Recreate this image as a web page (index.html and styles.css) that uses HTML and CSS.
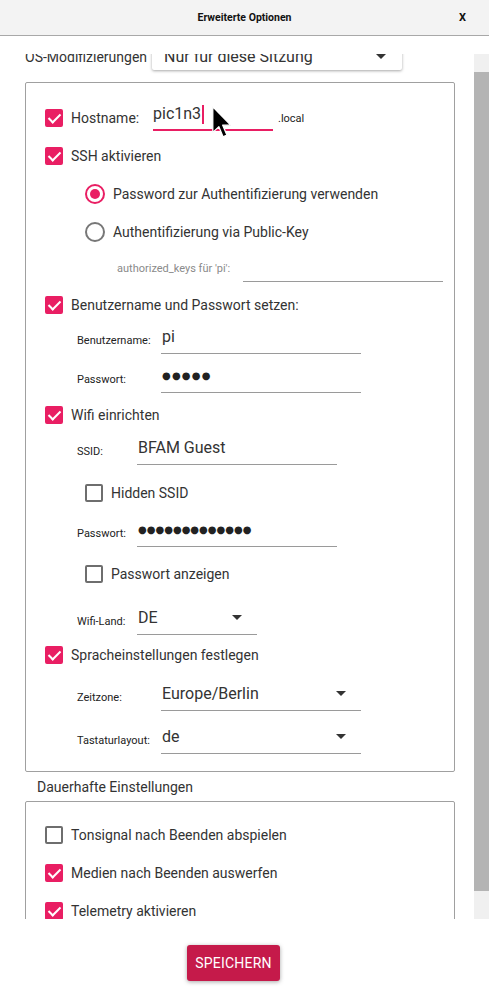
FILE: index.html
```html
<!DOCTYPE html>
<html lang="de">
<head>
<meta charset="utf-8">
<title>Erweiterte Optionen</title>
<link rel="stylesheet" href="styles.css">
</head>
<body>
<header class="titlebar">
  <div class="title">Erweiterte Optionen</div>
  <div class="close">X</div>
</header>

<div class="main">
  <div class="viewport">
    <div class="content">
      <div class="os-row">
        <span class="os-label">OS-Modifizierungen</span>
        <div class="combo"><span>Nur für diese Sitzung</span><i class="caret"></i></div>
      </div>

      <div class="box box-main">
        <div class="check-row">
          <span class="cb on"></span>
          <span class="host-label">Hostname:</span>
          <div class="host-input"><span>pic1n3</span><i class="text-cursor"></i></div>
          <span class="suffix">.local</span>
        </div>
        <div class="check-row"><span class="cb on"></span><span>SSH aktivieren</span></div>
        <div class="check-row indent radio-row"><span class="radio on"></span><span>Password zur Authentifizierung verwenden</span></div>
        <div class="check-row indent radio-row"><span class="radio"></span><span>Authentifizierung via Public-Key</span></div>
        <div class="field-row keys-row mt-1">
          <span class="field-label muted">authorized_keys für 'pi':</span>
          <div class="line-input w200"></div>
        </div>

        <div class="check-row mt-4"><span class="cb on"></span><span>Benutzername und Passwort setzen:</span></div>
        <div class="field-row sub">
          <span class="field-label w84">Benutzername:</span>
          <div class="line-input w200"><span class="value">pi</span></div>
        </div>
        <div class="field-row sub mt-9">
          <span class="field-label w84">Passwort:</span>
          <div class="line-input w200"><span class="dots">●●●●●</span></div>
        </div>

        <div class="check-row mt-3"><span class="cb on"></span><span>Wifi einrichten</span></div>
        <div class="field-row sub mt-1">
          <span class="field-label w60">SSID:</span>
          <div class="line-input w200"><span class="value">BFAM Guest</span></div>
        </div>
        <div class="check-row indent mt-9"><span class="cb"></span><span>Hidden SSID</span></div>
        <div class="field-row sub mt-5">
          <span class="field-label w60">Passwort:</span>
          <div class="line-input w200"><span class="dots dense">●●●●●●●●●●●●●</span></div>
        </div>
        <div class="check-row indent mt-8"><span class="cb"></span><span>Passwort anzeigen</span></div>
        <div class="field-row sub mt-12">
          <span class="field-label w60">Wifi-Land:</span>
          <div class="line-input w120 select"><span class="value">DE</span><i class="caret"></i></div>
        </div>

        <div class="check-row mt-1"><span class="cb on"></span><span>Spracheinstellungen festlegen</span></div>
        <div class="field-row sub mt-7">
          <span class="field-label w84">Zeitzone:</span>
          <div class="line-input w200 select"><span class="value">Europe/Berlin</span><i class="caret"></i></div>
        </div>
        <div class="field-row sub mt-13">
          <span class="field-label w84">Tastaturlayout:</span>
          <div class="line-input w200 select"><span class="value">de</span><i class="caret"></i></div>
        </div>
      </div>

      <div class="section-title">Dauerhafte Einstellungen</div>

      <div class="box box-persist">
        <div class="check-row"><span class="cb"></span><span>Tonsignal nach Beenden abspielen</span></div>
        <div class="check-row"><span class="cb on"></span><span>Medien nach Beenden auswerfen</span></div>
        <div class="check-row"><span class="cb on"></span><span>Telemetry aktivieren</span></div>
      </div>
    </div>
  </div>
  <div class="scrollbar">
    <div class="track-top"></div>
    <div class="thumb"></div>
    <div class="track-bottom"></div>
  </div>
</div>

<footer class="footer">
  <button class="save">SPEICHERN</button>
</footer>

<svg class="pointer" width="20" height="32" viewBox="0 0 12.5 20" aria-hidden="true">
  <path d="M0.5 0.5 L0.5 16.5 L4.3 12.9 L6.9 19.2 L9.3 18.2 L6.7 12 L11.8 12 Z" fill="#000" stroke="#fff" stroke-width="0.8" stroke-linejoin="round"/>
</svg>
</body>
</html>
```

FILE: styles.css
```css
* { box-sizing: border-box; }

html, body {
  margin: 0;
  padding: 0;
}

body {
  position: relative;
  width: 489px;
  height: 995px;
  overflow: hidden;
  background: #ffffff;
  font-family: Roboto, "Noto Sans", "Liberation Sans", sans-serif;
  color: #333333;
  font-size: 14px;
}

/* Title bar */
.titlebar {
  height: 36px;
  background: #f3f3f3;
  border-bottom: 1px solid #a8a8a8;
  display: flex;
  align-items: center;
  justify-content: center;
  position: relative;
}

.title {
  font-weight: 700;
  font-size: 10.5px;
  color: #111;
}

.close {
  position: absolute;
  right: 23px;
  top: 11px;
  font-weight: 700;
  font-size: 11px;
  color: #111;
}

/* Main scroll area */
.main {
  margin-top: 18px;
  height: 865px;
  display: flex;
}

.viewport {
  flex: 1;
  overflow: hidden;
}

.content {
  margin-top: -14px;
  padding: 0 19px 0 25px;
}

.scrollbar {
  width: 15px;
  display: flex;
  flex-direction: column;
}

.track-top { height: 18px; background: #f0f0f0; }
.thumb { height: 819px; background: #b4b4b4; }
.track-bottom { flex: 1; background: #f0f0f0; }

/* OS row */
.os-row {
  height: 30px;
  display: flex;
  align-items: center;
}

.os-label {
  width: 127px;
  font-size: 14px;
  color: #333;
  padding-top: 3px;
}

.combo {
  width: 250px;
  height: 30px;
  background: #fff;
  border-radius: 2px;
  box-shadow: 0 1px 3px rgba(0, 0, 0, 0.35);
  display: flex;
  align-items: center;
  justify-content: space-between;
  padding: 3px 16px 0 12px;
  font-size: 16px;
  color: #333;
}

.caret {
  display: block;
  width: 0;
  height: 0;
  border-left: 5px solid transparent;
  border-right: 5px solid transparent;
  border-top: 5px solid #333;
}

/* Boxes */
.box {
  border: 1px solid #a0a0a0;
  border-radius: 2px;
  padding-left: 19px;
}

.box-main {
  margin-top: 12px;
  padding-top: 16px;
  padding-bottom: 17px;
}

.box-persist {
  padding-top: 14px;
  height: 200px;
}

.section-title {
  height: 29px;
  display: flex;
  align-items: center;
  padding-left: 12px;
  font-size: 14px;
  color: #333;
}

/* Rows */
.check-row {
  height: 38px;
  display: flex;
  align-items: center;
  gap: 8px;
  font-size: 14px;
  color: #333;
}

.indent { padding-left: 40px; }

.cb {
  width: 18px;
  height: 18px;
  flex: none;
  border: 2px solid #6e6e6e;
  border-radius: 2px;
  position: relative;
}

.cb.on {
  background: #e91e63;
  border-color: #e91e63;
}

.cb.on::after {
  content: "";
  position: absolute;
  left: 4px;
  top: 0px;
  width: 5px;
  height: 10px;
  border-right: 2px solid #fff;
  border-bottom: 2px solid #fff;
  transform: rotate(45deg);
}

.radio {
  width: 20px;
  height: 20px;
  flex: none;
  border: 2px solid #777;
  border-radius: 50%;
  display: flex;
  align-items: center;
  justify-content: center;
}

.radio.on { border-color: #e91e63; }

.radio.on::after {
  content: "";
  width: 10px;
  height: 10px;
  border-radius: 50%;
  background: #e91e63;
}

/* Hostname */
.host-label { width: 74px; }

.host-input {
  align-self: flex-start;
  margin-top: 1px;
  width: 120px;
  height: 31px;
  border-bottom: 2px solid #e91e63;
  display: flex;
  align-items: center;
  font-size: 16px;
  color: #333;
  padding-bottom: 3px;
}

.text-cursor {
  display: block;
  width: 2px;
  height: 19px;
  margin-left: 1px;
  margin-top: 2px;
  background: #e91e63;
}

.suffix {
  font-size: 11px;
  color: #222;
  margin-left: -3px;
}

/* Field rows */
.field-row {
  height: 30px;
  display: flex;
  align-items: center;
}

.field-row.sub { padding-left: 32px; }

.keys-row { padding-left: 72px; }

.field-label {
  font-size: 11px;
  color: #222;
  flex: none;
  padding-top: 3px;
}

.field-label.muted {
  color: #8a8a8a;
  width: 126px;
}

.w84 { width: 84px; }
.w60 { width: 60px; }

.line-input {
  height: 30px;
  border-bottom: 1px solid #9a9a9a;
  display: flex;
  align-items: center;
  padding-bottom: 4px;
}

.w200 { width: 200px; }
.w120 { width: 120px; }

.line-input.select {
  justify-content: space-between;
  padding-right: 15px;
}

.value {
  font-size: 16px;
  color: #333;
  padding-left: 1px;
}

.dots {
  font-family: "DejaVu Sans", sans-serif;
  font-size: 10px;
  letter-spacing: 1.2px;
  color: #222;
  padding-left: 1px;
}

.dots.dense {
  letter-spacing: 0;
}

/* Margin helpers */
.mt-1 { margin-top: 1px; }
.mt-3 { margin-top: 3px; }
.mt-4 { margin-top: 4px; }
.mt-5 { margin-top: 5px; }
.mt-7 { margin-top: 7px; }
.mt-8 { margin-top: 8px; }
.mt-9 { margin-top: 9px; }
.mt-12 { margin-top: 12px; }
.mt-13 { margin-top: 13px; }

/* Footer */
.footer {
  padding-top: 26px;
  padding-left: 187px;
}

.save {
  width: 93px;
  height: 36px;
  border: none;
  border-radius: 3px;
  background: #c51a4a;
  color: #fff;
  font-family: Roboto, "Liberation Sans", sans-serif;
  font-size: 14px;
  letter-spacing: 0.2px;
  box-shadow: 0 1px 4px rgba(0, 0, 0, 0.35);
  padding: 0;
}

/* Mouse pointer overlay */
.pointer {
  position: absolute;
  left: 212px;
  top: 106px;
}
```
